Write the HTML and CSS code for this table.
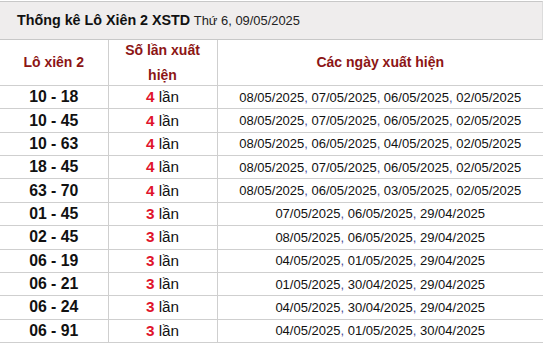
FILE: index.html
```
<!DOCTYPE html>
<html>
<head>
<meta charset="utf-8">
<link rel="stylesheet" href="styles.css">
</head>
<body>
<div class="wrap">
  <div class="title"><b>Thống kê Lô Xiên 2 XSTD</b> <span class="sub">Thứ 6, 09/05/2025</span></div>
  <table class="tbl">
    <colgroup><col class="c1"><col class="c2"><col class="c3"></colgroup>
    <thead>
      <tr><th><div class="hd">Lô xiên 2</div></th><th><div class="hd">Số lần xuất hiện</div></th><th><div class="hd">Các ngày xuất hiện</div></th></tr>
    </thead>
    <tbody>
      <tr><td class="pair">10 - 18</td><td class="cnt"><b>4</b> lần</td><td class="dates">08/05/2025<i>,</i> 07/05/2025<i>,</i> 06/05/2025<i>,</i> 02/05/2025</td></tr>
      <tr><td class="pair">10 - 45</td><td class="cnt"><b>4</b> lần</td><td class="dates">08/05/2025<i>,</i> 07/05/2025<i>,</i> 06/05/2025<i>,</i> 02/05/2025</td></tr>
      <tr><td class="pair">10 - 63</td><td class="cnt"><b>4</b> lần</td><td class="dates">08/05/2025<i>,</i> 06/05/2025<i>,</i> 04/05/2025<i>,</i> 02/05/2025</td></tr>
      <tr><td class="pair">18 - 45</td><td class="cnt"><b>4</b> lần</td><td class="dates">08/05/2025<i>,</i> 07/05/2025<i>,</i> 06/05/2025<i>,</i> 02/05/2025</td></tr>
      <tr><td class="pair">63 - 70</td><td class="cnt"><b>4</b> lần</td><td class="dates">08/05/2025<i>,</i> 06/05/2025<i>,</i> 03/05/2025<i>,</i> 02/05/2025</td></tr>
      <tr><td class="pair">01 - 45</td><td class="cnt"><b>3</b> lần</td><td class="dates">07/05/2025<i>,</i> 06/05/2025<i>,</i> 29/04/2025</td></tr>
      <tr><td class="pair">02 - 45</td><td class="cnt"><b>3</b> lần</td><td class="dates">08/05/2025<i>,</i> 06/05/2025<i>,</i> 29/04/2025</td></tr>
      <tr><td class="pair">06 - 19</td><td class="cnt"><b>3</b> lần</td><td class="dates">04/05/2025<i>,</i> 01/05/2025<i>,</i> 29/04/2025</td></tr>
      <tr><td class="pair">06 - 21</td><td class="cnt"><b>3</b> lần</td><td class="dates">01/05/2025<i>,</i> 30/04/2025<i>,</i> 29/04/2025</td></tr>
      <tr><td class="pair">06 - 24</td><td class="cnt"><b>3</b> lần</td><td class="dates">04/05/2025<i>,</i> 30/04/2025<i>,</i> 29/04/2025</td></tr>
      <tr><td class="pair">06 - 91</td><td class="cnt"><b>3</b> lần</td><td class="dates">04/05/2025<i>,</i> 01/05/2025<i>,</i> 30/04/2025</td></tr>
    </tbody>
  </table>
</div>
</body>
</html>
```
FILE: styles.css
```
html, body {
  margin: 0;
  padding: 0;
  background: #fff;
}
body {
  font-family: "Liberation Sans", Arial, sans-serif;
  color: #111;
  padding-top: 1px;
}
.wrap {
  width: 543px;
}
.title {
  background: #efeded;
  border-top: 1px solid #c8c8c8;
  border-bottom: 1px solid #c8c8c8;
  border-right: 1px solid #dcdcdc;
  height: 37px;
  line-height: 37px;
  padding-left: 17px;
  font-size: 13px;
  color: #222;
  box-sizing: content-box;
  white-space: nowrap;
}
.title b {
  font-weight: bold;
  font-size: 14.3px;
  color: #111;
}
.title .sub {
  font-size: 12.9px;
}
.tbl {
  width: 543px;
  border-collapse: collapse;
  table-layout: fixed;
}
.c1 { width: 108px; }
.c2 { width: 109px; }
.c3 { width: 326px; }
.tbl th, .tbl td {
  border-top: 1px solid #cfcfcf;
  border-bottom: 1px solid #cfcfcf;
  border-left: 1px solid #cfcfcf;
  text-align: center;
  padding: 0 4px;
}
.tbl th:first-child, .tbl td:first-child {
  border-left: none;
}
.tbl thead th {
  border-top: none;
  height: 45px;
  font-size: 14px;
  font-weight: bold;
  color: #8c1515;
  padding: 0 12px;
}
.hd {
  line-height: 25px;
  margin: -3px 0;
}
.tbl tbody td {
  height: 22.36px;
  padding-top: 0;
  padding-bottom: 0;
}
.pair {
  font-size: 15.8px;
  font-weight: bold;
  color: #111;
}
.cnt {
  font-size: 15.3px;
  color: #111;
}
.cnt b {
  color: #e0142c;
  font-weight: bold;
}
.dates {
  font-size: 13px;
  color: #111;
}
.dates i {
  font-style: normal;
  color: #4a4f9a;
}
```
